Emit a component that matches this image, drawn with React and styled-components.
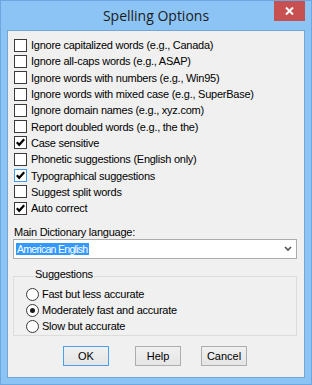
import React from "react";
import styled, { createGlobalStyle } from "styled-components";

const Global = createGlobalStyle`
  html, body { margin: 0; padding: 0; background: #ffffff; }
  body { font-family: "Liberation Sans", Arial, sans-serif; }
  * { box-sizing: border-box; }
`;

const Window = styled.div`
  width: 312px;
  height: 385px;
  border: 1px solid #6ea7df;
  background: #8cc4f6;
  padding: 0 6px 6px;
  display: flex;
  flex-direction: column;
  font-family: "Liberation Sans", Arial, sans-serif;
  font-size: 11px;
  letter-spacing: -0.25px;
  color: #000;
`;

const TitleBar = styled.div`
  height: 29px;
  margin: 0 -6px;
  display: grid;
  grid-template-columns: 1fr auto 1fr;
  align-items: start;
`;

const Title = styled.div`
  grid-column: 2;
  font-family: "Open Sans", "Noto Sans", sans-serif;
  font-size: 14px;
  letter-spacing: 0;
  line-height: 29px;
  color: #1b1b1b;
`;

const CloseButton = styled.div`
  grid-column: 3;
  justify-self: end;
  margin-right: 6px;
  width: 31px;
  height: 20px;
  background: #c75050;
  display: flex;
  align-items: center;
  justify-content: center;
`;

const Client = styled.div`
  flex: 1;
  border: 1px solid #73a5d6;
  background: #f0f0f0;
  padding: 6px 6px 0;
  display: flex;
  flex-direction: column;
`;

const CheckList = styled.div`
  display: flex;
  flex-direction: column;
`;

const Row = styled.label`
  display: flex;
  align-items: center;
  height: 16.3px;
  gap: 4px;
  white-space: nowrap;
`;

const Box = styled.span`
  width: 13px;
  height: 13px;
  flex: none;
  background: #ffffff;
  border: 1px solid ${(p) => (p.$focus ? "#3c9cf0" : "#3a3a3a")};
  display: flex;
  align-items: center;
  justify-content: center;
`;

const FieldLabel = styled.div`
  margin-top: 10px;
  line-height: 13px;
`;

const Select = styled.div`
  margin-left: -1px;
  width: 284px;
  height: 20px;
  border: 1px solid #acacac;
  background: #ffffff;
  display: flex;
  align-items: center;
  justify-content: space-between;
  padding: 0 4px 0 2px;
`;

const SelectedText = styled.span`
  background: #3399ff;
  color: #ffffff;
  height: 12px;
  line-height: 12px;
  padding: 0 1px;
  font-size: 10.5px;
  letter-spacing: -0.7px;
`;

const Group = styled.fieldset`
  margin: 9px 0 0 -1px;
  width: 284px;
  border: 1px solid #dcdcdc;
  padding: 2px 0 1px 12px;
  min-width: 0;
`;

const Legend = styled.legend`
  margin-left: 8px;
  padding: 0 1px 3px;
  line-height: 13px;
`;

const RadioRow = styled.label`
  display: flex;
  align-items: center;
  height: 16px;
  gap: 3px;
  white-space: nowrap;
`;

const Radio = styled.span`
  width: 13px;
  height: 13px;
  flex: none;
  border-radius: 50%;
  border: 1px solid #3a3a3a;
  background: #ffffff;
  display: flex;
  align-items: center;
  justify-content: center;
`;

const Dot = styled.span`
  width: 5px;
  height: 5px;
  border-radius: 50%;
  background: #1a1a1a;
`;

const ButtonRow = styled.div`
  display: flex;
  margin-top: 10px;
  padding-left: 49px;
`;

const Button = styled.div`
  width: 46px;
  height: 20px;
  margin-right: ${(p) => p.$after}px;
  border: 1px solid ${(p) => (p.$default ? "#4aa2ee" : "#adadad")};
  background: linear-gradient(#f0f0f0, #e5e5e5);
  display: flex;
  align-items: center;
  justify-content: center;
  letter-spacing: 0;
`;

const Check = () => (
  <svg width="11" height="11" viewBox="0 0 11 11">
    <polyline points="1.8,5.3 4.2,7.8 9.2,2.3" fill="none" stroke="#000" strokeWidth="2.2" />
  </svg>
);

const Chevron = () => (
  <svg width="8" height="6" viewBox="0 0 8 6">
    <polyline points="1,1 4,4 7,1" fill="none" stroke="#555" strokeWidth="1.7" />
  </svg>
);

const options = [
  { t: "Ignore capitalized words (e.g., Canada)" },
  { t: "Ignore all-caps words (e.g., ASAP)" },
  { t: "Ignore words with numbers (e.g., Win95)" },
  { t: "Ignore words with mixed case (e.g., SuperBase)" },
  { t: "Ignore domain names (e.g., xyz.com)" },
  { t: "Report doubled words (e.g., the the)" },
  { t: "Case sensitive", c: true },
  { t: "Phonetic suggestions (English only)" },
  { t: "Typographical suggestions", c: true, f: true },
  { t: "Suggest split words" },
  { t: "Auto correct", c: true },
];

const radios = [
  { t: "Fast but less accurate" },
  { t: "Moderately fast and accurate", s: true },
  { t: "Slow but accurate" },
];

export default function App() {
  return (
    <>
      <Global />
      <Window>
        <TitleBar>
          <Title>Spelling Options</Title>
          <CloseButton>
            <svg width="9" height="8" viewBox="0 0 9 8">
              <path d="M1 0.5 L8 7.5 M8 0.5 L1 7.5" stroke="#fff" strokeWidth="2" />
            </svg>
          </CloseButton>
        </TitleBar>
        <Client>
          <CheckList>
            {options.map((o) => (
              <Row key={o.t}>
                <Box $focus={o.f}>{o.c && <Check />}</Box>
                <span>{o.t}</span>
              </Row>
            ))}
          </CheckList>
          <FieldLabel>Main Dictionary language:</FieldLabel>
          <Select>
            <SelectedText>American English</SelectedText>
            <Chevron />
          </Select>
          <Group>
            <Legend>Suggestions</Legend>
            {radios.map((r) => (
              <RadioRow key={r.t}>
                <Radio>{r.s && <Dot />}</Radio>
                <span>{r.t}</span>
              </RadioRow>
            ))}
          </Group>
          <ButtonRow>
            <Button $default $after={26}>OK</Button>
            <Button $after={20}>Help</Button>
            <Button $after={0}>Cancel</Button>
          </ButtonRow>
        </Client>
      </Window>
    </>
  );
}
